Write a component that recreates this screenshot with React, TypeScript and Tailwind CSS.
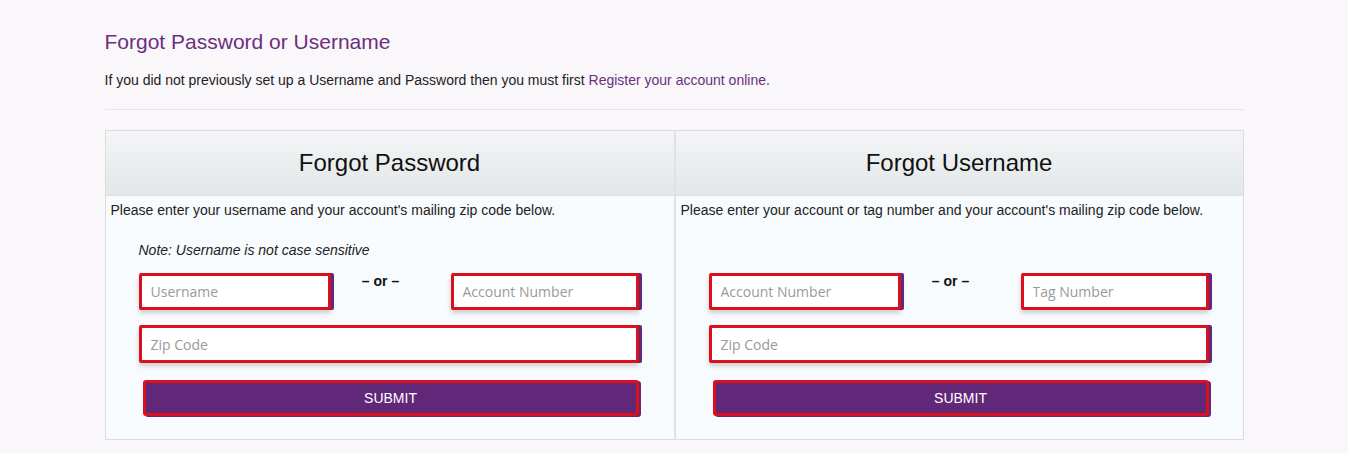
import React from 'react';

const font = { fontFamily: '"Liberation Sans", Arial, sans-serif' };

interface FieldProps {
  placeholder: string;
  className?: string;
}

// red annotation frame around the input, purple edge peeking out on the right
const Field: React.FC<FieldProps> = ({ placeholder, className = '' }) => (
  <input
    type="text"
    placeholder={placeholder}
    className={`h-[37px] w-full rounded-[2px] border-[3px] border-[#dc0f1c] bg-white px-[9px] text-[14px] text-[#333] placeholder:text-[#9a9a9a] shadow-[3px_0_0_#5e2a7b,0_3px_5px_rgba(0,0,0,0.18)] outline-none ${className}`}
    style={{ fontFamily: '"Open Sans", sans-serif' }}
  />
);

interface PanelProps {
  title: string;
  description: string;
  note?: string;
  first: string;
  second: string;
  bordered?: boolean;
}

const Panel: React.FC<PanelProps> = ({ title, description, note, first, second, bordered }) => (
  <div className={`flex flex-col ${bordered ? 'border-r-2 border-[#dfe1e2]' : ''}`}>
    <div className="flex h-[65px] items-center justify-center border-b border-[#dcdfe0] bg-gradient-to-b from-[#f3f5f6] to-[#e3e7e8]">
      <h2 className="text-[24px] text-[#111]">{title}</h2>
    </div>
    <div className="flex-1 bg-[#f8fbfd] px-[5px] pt-[4px] pb-[23px]">
      <p className="text-[14px] leading-[20px] text-[#222]">{description}</p>
      <div className="ml-[28px] w-[500px]">
        <p className="mt-[20px] h-[20px] text-[14px] italic leading-[20px] text-[#222]">{note}</p>
        <div className="mt-[13px] grid grid-cols-[192px_1fr_188px] items-start">
          <Field placeholder={first} />
          <div className="pt-[1px] pr-[20px] text-center text-[14px] font-bold leading-[14px] text-[#111]">– or –</div>
          <Field placeholder={second} />
        </div>
        <Field placeholder="Zip Code" className="mt-[15px] h-[38px]" />
        <button
          type="button"
          className="mt-[17px] ml-[4px] h-[36px] w-[496px] rounded-[3px] border-[3px] border-[#dc0f1c] bg-[#612879] text-[14px] text-white shadow-[2px_1px_0_#5e2a7b]"
        >
          SUBMIT
        </button>
      </div>
    </div>
  </div>
);

export default function App() {
  return (
    <div className="min-h-[453px] bg-[#f9f7fa]" style={font}>
      <div className="mx-auto w-[1139px] pt-[31px]">
        <h1 className="text-[21px] leading-[22px] text-[#6b2f80]">Forgot Password or Username</h1>
        <p className="mt-[17px] text-[14px] leading-[20px] text-[#222]">
          If you did not previously set up a Username and Password then you must first{' '}
          <a href="#" className="text-[#6b2f80]">Register your account online.</a>
        </p>
        <hr className="mt-[19px] border-t border-[#e9e6ea]" />
        <div className="mt-[20px] grid grid-cols-[570px_1fr] border border-[#dcdcdc]">
          <Panel
            title="Forgot Password"
            description="Please enter your username and your account's mailing zip code below."
            note="Note: Username is not case sensitive"
            first="Username"
            second="Account Number"
            bordered
          />
          <Panel
            title="Forgot Username"
            description="Please enter your account or tag number and your account's mailing zip code below."
            first="Account Number"
            second="Tag Number"
          />
        </div>
      </div>
    </div>
  );
}
